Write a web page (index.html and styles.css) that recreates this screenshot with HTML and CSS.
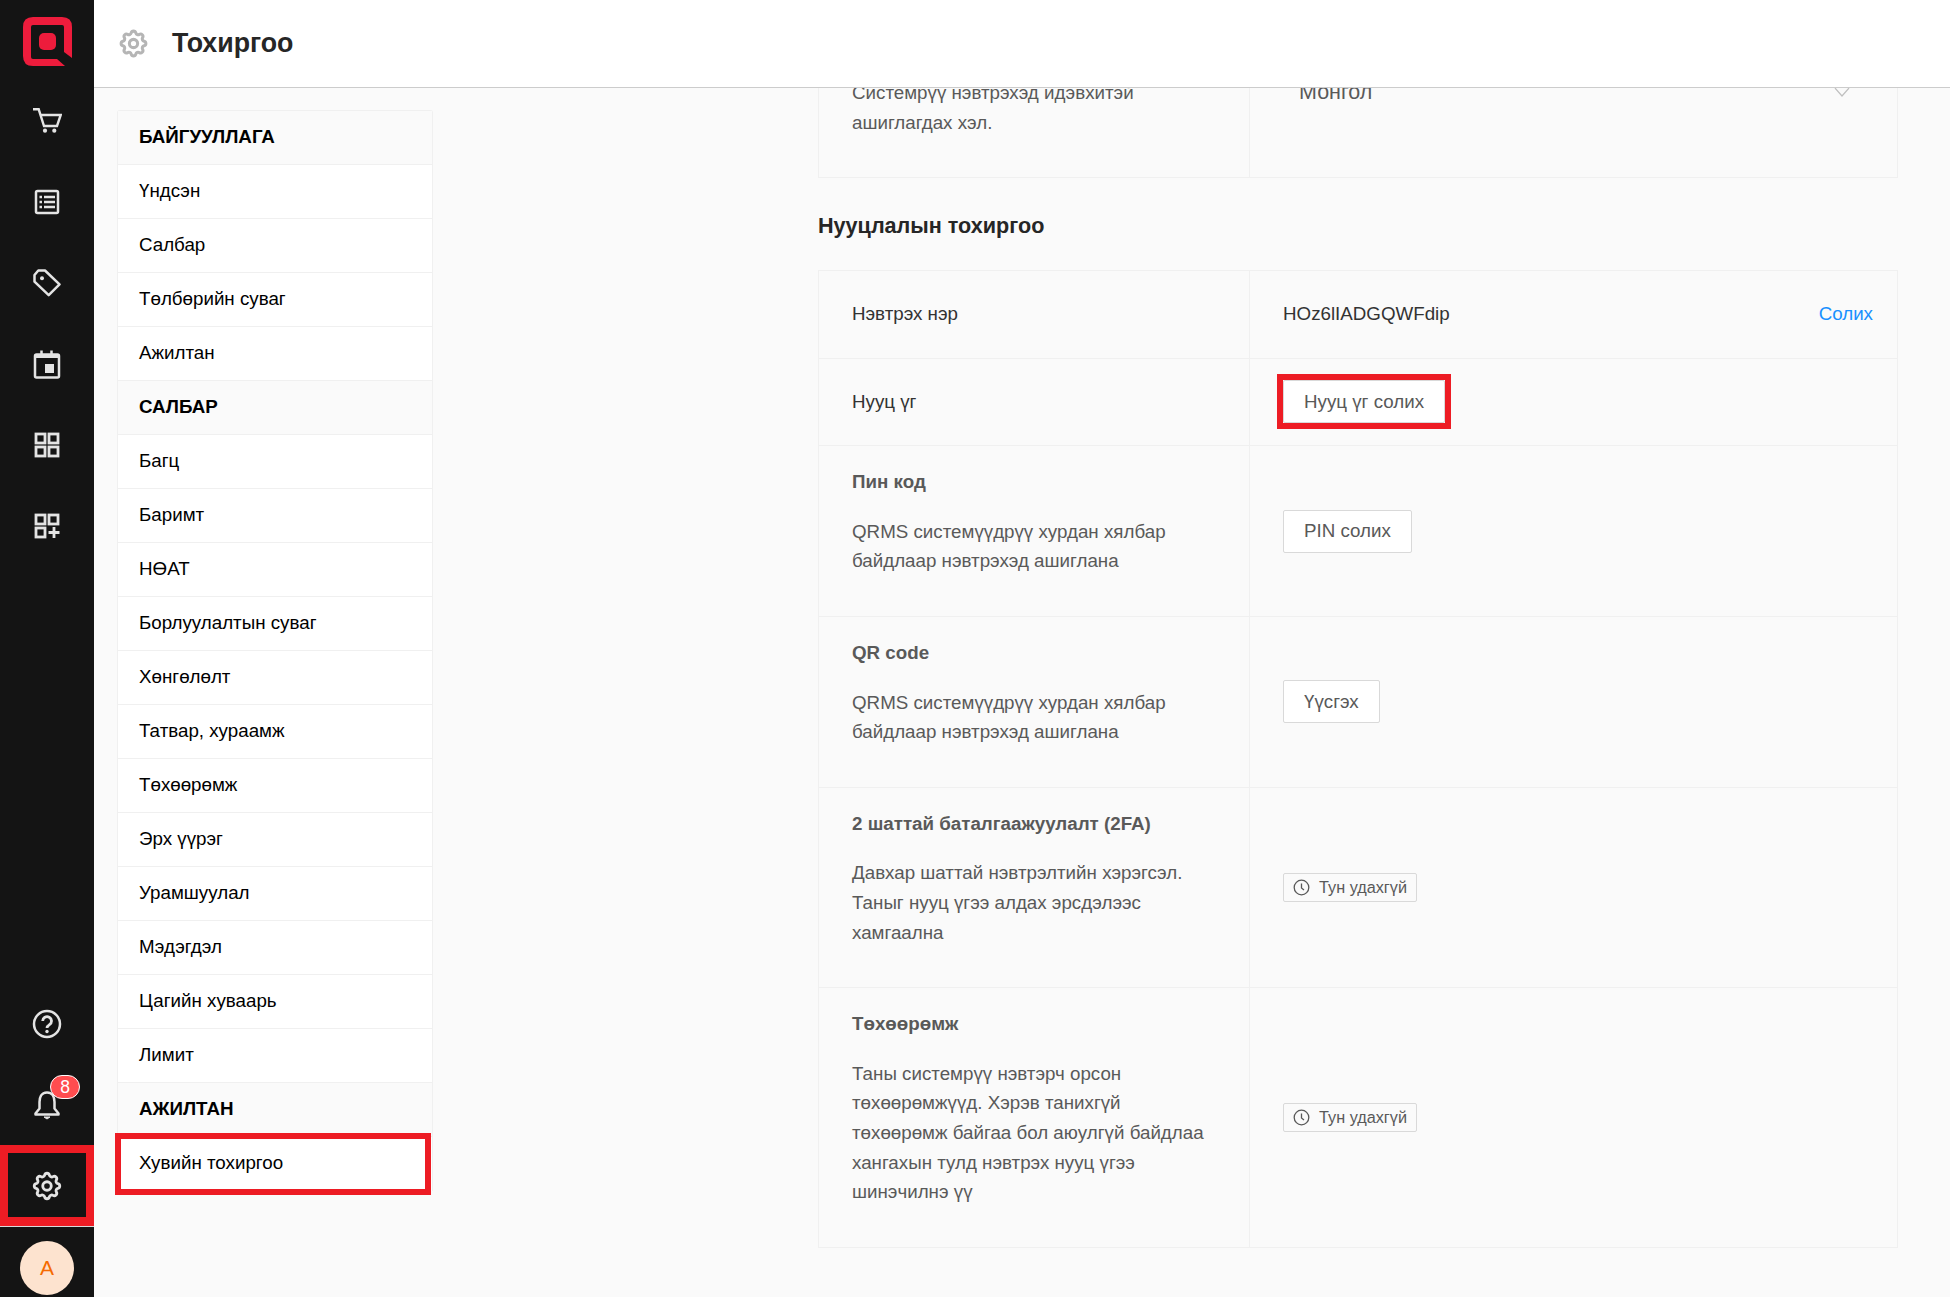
FILE: index.html

```html
<!DOCTYPE html>
<html lang="mn">
<head>
<meta charset="UTF-8" />
<meta name="viewport" content="width=device-width, initial-scale=1" />
<title>Тохиргоо</title>
<link rel="stylesheet" href="styles.css">
</head>
<body>
<div class="app">
  <aside class="sidebar">
    <div class="logo">
      <svg width="49" height="49" viewBox="0 0 49 49" fill="#ed1c3c"><path d="M10 0H39Q49 0 49 10V41L41 35V10Q41 8 39 8H10Q8 8 8 10V40Q8 42 10 42H34L42 49H10Q0 49 0 39V10Q0 0 10 0Z"/><rect x="16" y="16" width="17" height="17" rx="5"/></svg>
    </div>
    <nav class="side-nav">
      <a class="side-item"><svg width="30" height="30" viewBox="0 0 30 30" fill="none" stroke="#e4e4e4" stroke-width="2.4"><path d="M1 3.3H6.7L12 20H25L28.7 9H8.5"/><circle cx="13" cy="24.7" r="2.1" fill="#e4e4e4" stroke="none"/><circle cx="22.3" cy="24.7" r="2.1" fill="#e4e4e4" stroke="none"/></svg></a>
      <a class="side-item"><svg width="26" height="26" viewBox="0 0 26 26" fill="none" stroke="#e4e4e4" stroke-width="2.5"><rect x="2" y="2" width="22" height="22" rx="1.5"/><path d="M10 8H21M10 13H21M10 18H21" /><path d="M5.5 8H8M5.5 13H8M5.5 18H8" /></svg></a>
      <a class="side-item"><svg width="28" height="28" viewBox="0 0 28 28" fill="none" stroke="#e4e4e4" stroke-width="2.5" stroke-linejoin="round"><path d="M1.5 6L5.3 1.5H12L26.5 15.3L15.7 26.2L1.5 12.7Z"/><circle cx="9" cy="9.3" r="2" fill="#e4e4e4" stroke="none"/></svg></a>
      <a class="side-item"><svg width="28" height="30" viewBox="0 0 28 30" fill="none" stroke="#e4e4e4" stroke-width="2.5"><rect x="2" y="5.5" width="24" height="23" rx="1.5"/><path d="M2 7H26" stroke-width="4"/><path d="M8.5 1.5V5M18.5 1.5V5"/><rect x="12" y="15" width="9" height="9" fill="#e4e4e4" stroke="none"/></svg></a>
      <a class="side-item"><svg width="26" height="26" viewBox="0 0 26 26" fill="none" stroke="#e4e4e4" stroke-width="2.8"><rect x="2" y="2" width="9" height="9"/><rect x="15" y="2" width="9" height="9"/><rect x="2" y="15" width="9" height="9"/><rect x="15" y="15" width="9" height="9"/></svg></a>
      <a class="side-item"><svg width="26" height="26" viewBox="0 0 26 26" fill="none" stroke="#e4e4e4" stroke-width="2.8"><rect x="2" y="2" width="9" height="9"/><rect x="15" y="2" width="9" height="9"/><rect x="2" y="15" width="9" height="9"/><path d="M14.5 19.5H25.5M20 14V25"/></svg></a>
    </nav>
    <div class="side-bottom">
      <a class="side-item"><svg width="30" height="30" viewBox="0 0 30 30" fill="none" stroke="#e4e4e4" stroke-width="2.5"><circle cx="15" cy="15" r="13"/><path d="M10.7 12A4.4 4.4 0 1 1 17.5 15.7C16 16.7 15 17.4 15 19" stroke-width="2.8"/><circle cx="15" cy="22.5" r="1.7" fill="#e4e4e4" stroke="none"/></svg></a>
      <a class="side-item bell"><svg width="28" height="30" viewBox="0 0 28 30" fill="none" stroke="#e4e4e4" stroke-width="2.5" stroke-linejoin="round"><path d="M14 2.5C8 2.5 6.5 8 6.5 12V18.5L2.5 23.5V24.5H25.5V23.5L21.5 18.5V12C21.5 8 20 2.5 14 2.5Z"/><path d="M11 27H17L14 29Z" fill="#e4e4e4" stroke-width="1"/></svg><span class="badge">8</span></a>
      <a class="side-item marked"><svg width="34" height="34" viewBox="0 0 24 24" fill="none" stroke="#e4e4e4" stroke-width="2"><path d="M10.325 4.317c.426-1.756 2.924-1.756 3.35 0a1.724 1.724 0 0 0 2.573 1.066c1.543-.94 3.31.826 2.37 2.37a1.724 1.724 0 0 0 1.065 2.572c1.756.426 1.756 2.924 0 3.35a1.724 1.724 0 0 0-1.066 2.573c.94 1.543-.826 3.31-2.37 2.37a1.724 1.724 0 0 0-2.572 1.065c-.426 1.756-2.924 1.756-3.35 0a1.724 1.724 0 0 0-2.573-1.066c-1.543.94-3.31-.826-2.37-2.37a1.724 1.724 0 0 0-1.065-2.572c-1.756-.426-1.756-2.924 0-3.35a1.724 1.724 0 0 0 1.066-2.573c-.94-1.543.826-3.31 2.37-2.37c1 .608 2.296.07 2.572-1.065z"/><circle cx="12" cy="12" r="3"/></svg></a>
      <div class="side-user"><span class="avatar">A</span></div>
    </div>
  </aside>

  <div class="page">
    <header class="topbar">
      <svg class="topbar-icon" width="33" height="33" viewBox="0 0 24 24" fill="none" stroke="#b5b5b5" stroke-width="2.2"><path d="M10.325 4.317c.426-1.756 2.924-1.756 3.35 0a1.724 1.724 0 0 0 2.573 1.066c1.543-.94 3.31.826 2.37 2.37a1.724 1.724 0 0 0 1.065 2.572c1.756.426 1.756 2.924 0 3.35a1.724 1.724 0 0 0-1.066 2.573c.94 1.543-.826 3.31-2.37 2.37a1.724 1.724 0 0 0-2.572 1.065c-.426 1.756-2.924 1.756-3.35 0a1.724 1.724 0 0 0-2.573-1.066c-1.543.94-3.31-.826-2.37-2.37a1.724 1.724 0 0 0-1.065-2.572c-1.756-.426-1.756-2.924 0-3.35a1.724 1.724 0 0 0 1.066-2.573c-.94-1.543.826-3.31 2.37-2.37c1 .608 2.296.07 2.572-1.065z"/><circle cx="12" cy="12" r="3"/></svg>
      <h1>Тохиргоо</h1>
    </header>

    <main class="main">
      <ul class="menu">
        <li class="menu-title">БАЙГУУЛЛАГА</li>
        <li>Үндсэн</li>
        <li>Салбар</li>
        <li>Төлбөрийн суваг</li>
        <li>Ажилтан</li>
        <li class="menu-title">САЛБАР</li>
        <li>Багц</li>
        <li>Баримт</li>
        <li>НӨАТ</li>
        <li>Борлуулалтын суваг</li>
        <li>Хөнгөлөлт</li>
        <li>Татвар, хураамж</li>
        <li>Төхөөрөмж</li>
        <li>Эрх үүрэг</li>
        <li>Урамшуулал</li>
        <li>Мэдэгдэл</li>
        <li>Цагийн хуваарь</li>
        <li>Лимит</li>
        <li class="menu-title">АЖИЛТАН</li>
        <li class="marked">Хувийн тохиргоо</li>
      </ul>

      <section class="settings">
        <div class="card">
          <div class="row">
            <div class="cell">
              <p>Системрүү нэвтрэхэд идэвхитэй ашиглагдах хэл.</p>
            </div>
            <div class="cell select-cell">
              <span class="select-value">Монгол</span>
              <svg width="16" height="10" viewBox="0 0 16 10" fill="none" stroke="#bfbfbf" stroke-width="1.2"><path d="M1 1L8 9L15 1"/></svg>
            </div>
          </div>
        </div>

        <h2>Нууцлалын тохиргоо</h2>

        <div class="card">
          <div class="row row-small">
            <div class="cell label">Нэвтрэх нэр</div>
            <div class="cell value-cell"><span class="value">HOz6lIADGQWFdip</span><a class="link">Солих</a></div>
          </div>
          <div class="row row-small">
            <div class="cell label">Нууц үг</div>
            <div class="cell"><button class="btn marked">Нууц үг солих</button></div>
          </div>
          <div class="row">
            <div class="cell">
              <h3>Пин код</h3>
              <p>QRMS системүүдрүү хурдан хялбар байдлаар нэвтрэхэд ашиглана</p>
            </div>
            <div class="cell"><button class="btn">PIN солих</button></div>
          </div>
          <div class="row">
            <div class="cell">
              <h3>QR code</h3>
              <p>QRMS системүүдрүү хурдан хялбар байдлаар нэвтрэхэд ашиглана</p>
            </div>
            <div class="cell"><button class="btn">Үүсгэх</button></div>
          </div>
          <div class="row">
            <div class="cell">
              <h3>2 шаттай баталгаажуулалт (2FA)</h3>
              <p>Давхар шаттай нэвтрэлтийн хэрэгсэл. Таныг нууц үгээ алдах эрсдэлээс хамгаална</p>
            </div>
            <div class="cell"><span class="tag"><svg width="17" height="17" viewBox="0 0 17 17" fill="none" stroke="#595959" stroke-width="1.3"><circle cx="8.5" cy="8.5" r="7.3"/><path d="M8.5 4.5V9L11 11"/></svg>Тун удахгүй</span></div>
          </div>
          <div class="row">
            <div class="cell">
              <h3>Төхөөрөмж</h3>
              <p>Таны системрүү нэвтэрч орсон төхөөрөмжүүд. Хэрэв танихгүй төхөөрөмж байгаа бол аюулгүй байдлаа хангахын тулд нэвтрэх нууц үгээ шинэчилнэ үү</p>
            </div>
            <div class="cell"><span class="tag"><svg width="17" height="17" viewBox="0 0 17 17" fill="none" stroke="#595959" stroke-width="1.3"><circle cx="8.5" cy="8.5" r="7.3"/><path d="M8.5 4.5V9L11 11"/></svg>Тун удахгүй</span></div>
          </div>
        </div>
      </section>
    </main>
  </div>
</div>
</body>
</html>
```

FILE: styles.css

```css
* { box-sizing: border-box; }
html, body { margin: 0; height: 100%; }
body { font-family: "Liberation Sans", Arial, sans-serif; font-size: 18.75px; color: #000; background: #fafafa; overflow: hidden; }
.app { display: flex; height: 100vh; }

/* left dark bar */
.sidebar { width: 94px; flex: none; background: #141414; display: flex; flex-direction: column; }
.logo { height: 80px; padding-top: 17px; display: flex; justify-content: center; }
.logo svg { margin-left: 1px; }
.side-bottom { margin-top: auto; }
.side-item { position: relative; height: 81px; display: flex; align-items: center; justify-content: center; }
.side-item.marked::after { content: ""; position: absolute; inset: 0; border: 8px solid #ed1c24; border-bottom-width: 9px; }
.bell .badge { position: absolute; left: 50px; top: 11px; width: 30px; height: 24px; border-radius: 12px; background: #ff4d4f; border: 1px solid #fff; color: #fff; font-size: 17.5px; line-height: 22px; text-align: center; }
.side-user { height: 71px; border-top: 1px solid #d9d9d9; padding-top: 14px; display: flex; justify-content: center; }
.avatar { width: 54px; height: 54px; border-radius: 50%; background: #fde3cf; color: #f56a00; font-size: 21px; line-height: 54px; text-align: center; }

/* top bar */
.page { flex: 1; min-width: 0; display: flex; flex-direction: column; }
.topbar { height: 88px; flex: none; background: #fff; border-bottom: 1px solid #ccc; display: flex; align-items: center; padding-left: 23px; }
.topbar-icon { margin-right: 22px; }
.topbar h1 { margin: 0; font-size: 26.75px; font-weight: 700; color: #262626; }

.main { flex: 1; min-height: 0; overflow: hidden; display: flex; align-items: flex-start; }

/* settings menu */
.menu { width: 316px; flex: none; margin: 22px 0 0 23px; padding: 0; list-style: none; background: #fff; border: 1px solid #f0f0f0; border-bottom: 0; border-radius: 3px 3px 0 0; }
.menu li { position: relative; height: 54px; line-height: 51px; padding-left: 21px; border-bottom: 1px solid #f0f0f0; }
.menu .menu-title { background: #fafafa; font-weight: 700; }
.menu li.marked { border-bottom: 0; }
.menu li.marked::after { content: ""; position: absolute; left: -3px; right: 1px; top: -4px; bottom: -4px; border: 6px solid #ed1c24; }

/* right column */
.settings { flex: 1; min-width: 0; margin: -32px 52px 0 385px; }
.settings h2 { margin: 34px 0 31px; font-size: 21.6px; line-height: 27px; color: #262626; }
.card { border: 1px solid #f0f0f0; border-bottom: 0; }
.row { display: grid; grid-template-columns: 431px 1fr; border-bottom: 1px solid #f0f0f0; }
.row-small { height: 87.5px; }
.cell { padding: 21px 33px; display: flex; flex-direction: column; justify-content: center; align-items: flex-start; }
.cell:first-child { border-right: 1px solid #f0f0f0; display: block; }
.cell h3 { margin: 0 0 20px; font-size: 18.75px; line-height: 29.6px; font-weight: 700; color: #595959; }
.cell p { margin: 0 0 19px; line-height: 29.6px; color: #595959; }
.cell.label { display: flex; color: #333; }

.value-cell { flex-direction: row; justify-content: space-between; align-items: center; padding-right: 24px; }
.value { color: #333; }
.link { color: #1890ff; }
.select-cell { flex-direction: row; justify-content: space-between; align-items: flex-start; padding-left: 49px; padding-right: 47px; }
.select-value { color: #595959; font-size: 21.5px; line-height: 29.6px; }
.select-cell svg { margin-top: 9px; }

.btn { position: relative; height: 43px; padding: 0 20px; background: #fff; border: 1px solid #d9d9d9; border-radius: 2px; font: inherit; color: #595959; }
.btn.marked::after { content: ""; position: absolute; inset: -7px; border: 6px solid #ed1c24; }
.tag { display: inline-flex; align-items: center; height: 29px; padding: 0 9px; gap: 9px; border: 1px solid #d9d9d9; border-radius: 2px; background: #fafafa; font-size: 16.25px; color: #595959; }
```
